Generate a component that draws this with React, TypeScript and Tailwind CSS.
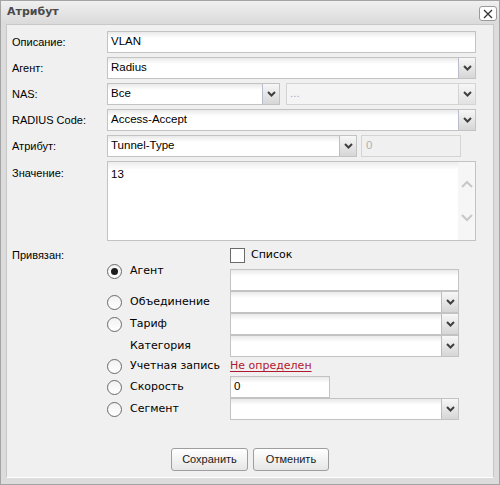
const Chevron = ({ color = "#3f3f3f", up = false }: { color?: string; up?: boolean }) => (
  <svg width="9" height="6" viewBox="0 0 9 6">
    <path d={up ? "M1 5 L4.5 1.5 L8 5" : "M1 1 L4.5 4.5 L8 1"} fill="none" stroke={color} strokeWidth="2" />
  </svg>
);

const ScrollChevron = ({ up = false }: { up?: boolean }) => (
  <svg width="12" height="8" viewBox="0 0 12 8">
    <path d={up ? "M1 7 L6 2 L11 7" : "M1 1 L6 6 L11 1"} fill="none" stroke="#c9c9c9" strokeWidth="2.2" />
  </svg>
);

const inputBg = "bg-[linear-gradient(to_bottom,#e9e9e9,#ffffff_6px)]";

const TextInput = ({ value = "", className = "" }: { value?: string; className?: string }) => (
  <div className={`h-[22px] border border-[#c3c3c3] ${inputBg} flex items-center px-[3px] text-[11.5px] text-black ${className}`}>
    {value}
  </div>
);

const Select = ({ value = "", className = "", disabled = false }: { value?: string; className?: string; disabled?: boolean }) => (
  <div
    className={`h-[22px] border flex ${disabled ? "border-[#d4d4d4] bg-[#f4f4f4]" : `border-[#c3c3c3] ${inputBg}`} ${className}`}
  >
    <div className={`flex-1 flex items-center px-[3px] text-[11.5px] ${disabled ? "text-[#a8a8c0]" : "text-black"}`}>{value}</div>
    <div
      className={`w-[17px] flex items-center justify-center border-l ${
        disabled ? "border-[#d4d4d4] bg-[linear-gradient(to_bottom,#f6f6f6,#e2e2e2)]" : "border-[#b9bccb] bg-[linear-gradient(to_bottom,#f7f7f7,#d6d6d6)]"
      }`}
    >
      <Chevron />
    </div>
  </div>
);

const Radio = ({ checked = false }: { checked?: boolean }) => (
  <div className="w-[15px] h-[15px] rounded-full border border-[#6a6a6a] bg-[linear-gradient(to_bottom,#f2f2f2,#ffffff)] flex items-center justify-center shrink-0">
    {checked && <div className="w-[7px] h-[7px] rounded-full bg-[#1e1e1e]" />}
  </div>
);

const Row = ({ label, children, top = false }: { label: string; children: React.ReactNode; top?: boolean }) => (
  <div className={`flex ${top ? "items-start" : "items-center"}`}>
    <div className={`w-[95px] shrink-0 text-[11px] text-black ${top ? "pt-[4px]" : ""}`}>{label}</div>
    {children}
  </div>
);

const RadioLabel = ({ label, checked = false, radio = true }: { label: string; checked?: boolean; radio?: boolean }) => (
  <div className="w-[123px] shrink-0 flex items-center font-['DejaVu_Sans',sans-serif] text-[11px] text-black">
    <div className="w-[23px] shrink-0">{radio && <Radio checked={checked} />}</div>
    <span>{label}</span>
  </div>
);

export default function App() {
  return (
    <div className="w-[500px] h-[485px] bg-[#dcdcdc] border border-[#a4a4a4] flex flex-col font-['Liberation_Sans',Arial,sans-serif]">
      <div className="h-[23px] shrink-0 flex items-center justify-between pl-[6px] pr-[2px] bg-[linear-gradient(to_bottom,#f0f0f0,#dadada)]">
        <span className="font-['DejaVu_Sans',sans-serif] font-bold text-[11px] text-[#4a4a4a]">Атрибут</span>
        <div className="w-[18px] h-[15px] mt-[2px] rounded-[3px] border border-[#9a9a9a] bg-white flex items-center justify-center">
          <svg width="10" height="10" viewBox="0 0 10 10">
            <path d="M1 1 L9 9 M9 1 L1 9" stroke="#333" strokeWidth="1.3" />
          </svg>
        </div>
      </div>

      <div className="mx-[5px] h-[454px] bg-[#f0f0f0] border border-[#c8c8c8] border-b-white flex flex-col pt-[6px] pl-[5px]">
        <div className="flex flex-col gap-[4px]">
          <Row label="Описание:">
            <TextInput value="VLAN" className="w-[369px]" />
          </Row>
          <Row label="Агент:">
            <Select value="Radius" className="w-[369px]" />
          </Row>
          <Row label="NAS:">
            <Select value="Все" className="w-[173px]" />
            <Select value="..." className="w-[190px] ml-[6px]" disabled />
          </Row>
          <Row label="RADIUS Code:">
            <Select value="Access-Accept" className="w-[369px]" />
          </Row>
          <Row label="Атрибут:">
            <Select value="Tunnel-Type" className="w-[250px]" />
            <div className="w-[100px] ml-[4px] h-[22px] border border-[#d4d4d4] bg-[#f0f0f0] flex items-center px-[4px] text-[11.5px] text-[#b0b0b0]">
              0
            </div>
          </Row>
          <Row label="Значение:" top>
            <div className="w-[369px] h-[80px] border border-[#c3c3c3] bg-[linear-gradient(to_bottom,#ececec,#ffffff_8px)] flex">
              <div className="flex-1 px-[3px] pt-[4px] text-[11.5px] text-black">13</div>
              <div className="w-[17px] bg-[#f6f6f6] flex flex-col items-center pt-[18px] gap-[26px]">
                <ScrollChevron up />
                <ScrollChevron />
              </div>
            </div>
          </Row>
        </div>

        <div className="flex mt-[6px]">
          <div className="w-[95px] shrink-0 h-[16px] flex items-center text-[11px] text-black">Привязан:</div>
          <div className="flex flex-col">
            <div className="flex h-[16px] items-center">
              <div className="w-[123px]" />
              <div className="w-[15px] h-[15px] border border-[#6a6a6a] bg-white" />
              <span className="ml-[6px] font-['DejaVu_Sans',sans-serif] text-[11px] text-black">Список</span>
            </div>
            <div className="flex h-[28px] items-start">
              <RadioLabel label="Агент" checked />
              <TextInput className="w-[229px] mt-[6px]" />
            </div>
            <div className="flex items-center">
              <RadioLabel label="Объединение" />
              <Select className="w-[229px]" />
            </div>
            <div className="flex items-center">
              <RadioLabel label="Тариф" />
              <Select className="w-[229px]" />
            </div>
            <div className="flex items-center">
              <RadioLabel label="Категория" radio={false} />
              <Select className="w-[229px]" />
            </div>
            <div className="flex items-center h-[19px]">
              <RadioLabel label="Учетная запись" />
              <a className="font-['DejaVu_Sans',sans-serif] text-[11px] text-[#b01830] underline underline-offset-2">Не определен</a>
            </div>
            <div className="flex items-center">
              <RadioLabel label="Скорость" />
              <TextInput value="0" className="w-[100px]" />
            </div>
            <div className="flex items-center">
              <RadioLabel label="Сегмент" />
              <Select className="w-[229px]" />
            </div>
          </div>
        </div>

        <div className="flex justify-center gap-[5px] mt-[28px] pr-[5px]">
          <button className="w-[77px] h-[23px] rounded-[3px] border border-[#9e9e9e] bg-[linear-gradient(to_bottom,#ffffff,#e6e6e6)] text-[11px] text-[#1a1a1a]">
            Сохранить
          </button>
          <button className="w-[76px] h-[23px] rounded-[3px] border border-[#9e9e9e] bg-[linear-gradient(to_bottom,#ffffff,#e6e6e6)] text-[11px] text-[#1a1a1a]">
            Отменить
          </button>
        </div>
      </div>
    </div>
  );
}
